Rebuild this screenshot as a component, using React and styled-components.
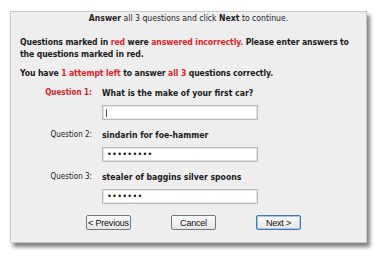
import React from 'react'
import styled, { createGlobalStyle } from 'styled-components'

const GlobalStyle = createGlobalStyle`
    body {
        margin: 0;
        background: #ffffff;
        font-family: "DejaVu Sans Condensed", "DejaVu Sans", sans-serif;
    }
`

const questions = [
    { label: 'Question 1:', text: 'What is the make of your first car?', value: '', wrong: true },
    { label: 'Question 2:', text: 'sindarin for foe-hammer', value: '•••••••••', wrong: false },
    { label: 'Question 3:', text: 'stealer of baggins silver spoons', value: '•••••••', wrong: false },
]

const App = () => {
    return (
        <>
            <GlobalStyle />
            <Page>
                <Panel>
                    <Header>
                        <b>Answer</b> all 3 questions and click <b>Next</b> to continue.
                    </Header>
                    <Notice>
                        Questions marked in <Red>red</Red> were <Red>answered incorrectly.</Red> Please enter answers to the questions marked in red.
                    </Notice>
                    <Notice $gap={7}>
                        You have <Red>1 attempt left</Red> to answer <Red>all 3</Red> questions correctly.
                    </Notice>
                    <QuestionGrid>
                        {questions.map(q => (
                            <React.Fragment key={q.label}>
                                <Label $wrong={q.wrong}>{q.label}</Label>
                                <QuestionText>{q.text}</QuestionText>
                                <span />
                                <Answer $empty={!q.value}>{q.value}</Answer>
                            </React.Fragment>
                        ))}
                    </QuestionGrid>
                    <Buttons>
                        <Button>&lt; Previous</Button>
                        <Button>Cancel</Button>
                        <Button $primary>Next &gt;</Button>
                    </Buttons>
                </Panel>
            </Page>
        </>
    )
}

export default App

const Page = styled.div`
    padding: 11px 15px 15px 10px;
`

const Panel = styled.div`
    width: 357px;
    height: 232px;
    box-sizing: border-box;
    background: #eeeeee;
    border: 1px solid #c9c9c9;
    box-shadow: 3px 4px 4px rgba(0, 0, 0, 0.5);
    color: #1a1a1a;
    font-size: 8.6px;
    line-height: 12px;
`

const Header = styled.div`
    text-align: center;
    color: #222;
`

const Notice = styled.p`
    margin: ${p => p.$gap || 12}px 12px 0 9px;
    font-weight: bold;
    letter-spacing: -0.1px;
`

const Red = styled.span`
    color: #e0232b;
`

const QuestionGrid = styled.div`
    display: grid;
    grid-template-columns: 81px 156px;
    column-gap: 10px;
    margin-top: 8px;
`

const Label = styled.div`
    text-align: right;
    font-size: 8px;
    font-weight: ${p => (p.$wrong ? 'bold' : 'normal')};
    color: ${p => (p.$wrong ? '#d6202a' : '#222')};
`

const QuestionText = styled.div`
    font-weight: bold;
`

const Answer = styled.div`
    height: 15px;
    box-sizing: border-box;
    margin: 6px 0 9px;
    background: #ffffff;
    border: 1px solid #b9bcbf;
    box-shadow: inset 0 0 0 1px #e4e4e4;
    padding-left: 4px;
    font-size: 9px;
    line-height: 13px;
    letter-spacing: 0.3px;
    color: #111;
    position: relative;
    &::before {
        content: '';
        display: ${p => (p.$empty ? 'block' : 'none')};
        position: absolute;
        left: 3px;
        top: 3px;
        width: 1px;
        height: 8px;
        background: #555;
    }
`

const Buttons = styled.div`
    display: flex;
    gap: 40px;
    padding-left: 75px;
    margin-top: 2px;
`

const Button = styled.button`
    width: 45px;
    height: 15px;
    padding: 0;
    box-sizing: border-box;
    font: 400 9px "Liberation Sans", Arial, sans-serif;
    letter-spacing: -0.2px;
    color: #111;
    background: linear-gradient(#fafafa, #e6e6e6);
    border: 1px solid ${p => (p.$primary ? '#3f78b5' : '#707880')};
    border-radius: 2px;
    box-shadow: ${p => (p.$primary ? 'inset 0 0 0 1px #a9c6e6' : 'none')};
`
